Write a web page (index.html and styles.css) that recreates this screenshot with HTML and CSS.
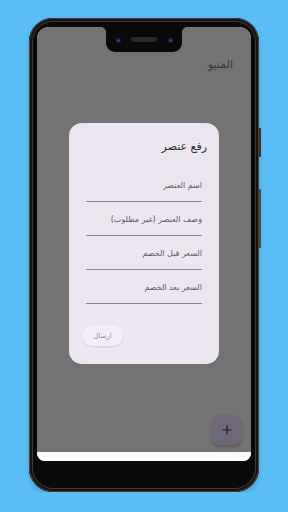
FILE: index.html
```html
<!DOCTYPE html>
<html lang="ar">
<head>
    <meta charset="UTF-8">
    <meta name="viewport" content="width=device-width, initial-scale=1.0">
    <title>المنيو</title>
    <link rel="stylesheet" href="styles.css">
</head>
<body>
    <div class="phone">
        <span class="side-btn power"></span>
        <span class="side-btn volume"></span>

        <div class="screen">
            <div class="notch">
                <span class="cam cam-left"></span>
                <span class="speaker"></span>
                <span class="cam cam-right"></span>
            </div>

            <div class="content">
                <div class="app-bar">المنيو</div>

                <div class="scrim">
                    <div class="dialog" dir="rtl">
                        <h2 class="dialog-title">رفع عنصر</h2>
                        <div class="field"><span>اسم العنصر</span></div>
                        <div class="field"><span>وصف العنصر (غير مطلوب)</span></div>
                        <div class="field"><span>السعر قبل الخصم</span></div>
                        <div class="field"><span>السعر بعد الخصم</span></div>
                        <div class="actions">
                            <button class="send-btn">ارسال</button>
                        </div>
                    </div>
                </div>

                <button class="fab">
                    <svg width="10" height="10" viewBox="0 0 10 10">
                        <path d="M5 0.5v9M0.5 5h9" stroke="#1a1530" stroke-width="1.2" fill="none"/>
                    </svg>
                </button>
            </div>
            <div class="nav-strip"></div>
        </div>
    </div>
</body>
</html>
```

FILE: styles.css
```css
body {
    margin: 0;
    background-color: #5bbdf7;
    font-family: "DejaVu Sans", sans-serif;
}

.phone {
    position: relative;
    width: 230px;
    height: 474px;
    margin: 18px auto 0;
    box-sizing: border-box;
    padding: 9px 8px 0;
    background-color: #0a0a0a;
    border-radius: 24px;
    box-shadow: inset 0 0 0 1px #4a4036,
                inset 0 0 0 3px #151515,
                inset 0 0 0 4px #3c3c3c,
                0 3px 6px rgba(0, 0, 0, 0.15);
}

.side-btn {
    position: absolute;
    right: -2px;
    width: 2px;
    background-color: #3a3129;
    border-radius: 0 1px 1px 0;
}

.power {
    top: 110px;
    height: 29px;
}

.volume {
    top: 171px;
    height: 59px;
    background-color: #4a4a4a;
}

.screen {
    position: relative;
    height: 434px;
    display: flex;
    flex-direction: column;
    border-radius: 12px 12px 8px 8px;
    overflow: hidden;
    background-color: #fbfbfb;
}

.notch {
    position: absolute;
    top: 0;
    left: 69px;
    width: 76px;
    height: 25px;
    background-color: #0a0a0a;
    border-radius: 0 0 9px 9px;
    display: flex;
    align-items: center;
    justify-content: center;
    gap: 10px;
    z-index: 5;
}

.notch::before,
.notch::after {
    content: "";
    position: absolute;
    top: 0;
    width: 6px;
    height: 6px;
}

.notch::before {
    left: -6px;
    background: radial-gradient(circle at 0 100%, transparent 6px, #0a0a0a 6.5px);
}

.notch::after {
    right: -6px;
    background: radial-gradient(circle at 100% 100%, transparent 6px, #0a0a0a 6.5px);
}

.cam {
    width: 6px;
    height: 6px;
    border-radius: 50%;
    background: radial-gradient(circle at 60% 60%, #3a4fa0 0, #1b2248 2px, #0d0d14 3px);
}

.cam-left {
    box-shadow: -1px -2px 0 -2px #fff;
}

.speaker {
    width: 26px;
    height: 5px;
    border-radius: 3px;
    background-color: #2b2b2b;
}

.content {
    position: relative;
    flex: 1;
    background-color: #737373;
}

.nav-strip {
    height: 9px;
    background-color: #fbfbfb;
}

.app-bar {
    padding: 32px 18px 0 0;
    text-align: right;
    font-size: 11px;
    line-height: 12px;
    color: #333;
}

.scrim {
    position: absolute;
    top: 0;
    left: 0;
    right: 0;
    bottom: 0;
    display: flex;
    justify-content: center;
    align-items: flex-start;
    padding-top: 96px;
}

.dialog {
    width: 150px;
    box-sizing: border-box;
    padding: 16px 17px 18px;
    background-color: #ece6f0;
    border-radius: 13px;
}

.dialog-title {
    margin: 0 -5px 13px 0;
    font-size: 11px;
    line-height: 16px;
    font-weight: normal;
    color: #2a2830;
}

.field {
    height: 34px;
    box-sizing: border-box;
    padding-top: 12px;
    border-bottom: 1px solid #8a8590;
    font-size: 8px;
    line-height: 12px;
    color: #5d5963;
}

.actions {
    display: flex;
    justify-content: flex-end;
    margin: 21px 0 0 -4px;
}

.send-btn {
    width: 41px;
    height: 21px;
    border: none;
    border-radius: 11px;
    background-color: #f3eef6;
    box-shadow: 0 1px 2px rgba(0, 0, 0, 0.12);
    font-family: inherit;
    font-size: 7px;
    color: #8d8796;
    padding: 0;
}

.fab {
    position: absolute;
    right: 9px;
    bottom: 7px;
    width: 31px;
    height: 30px;
    border: none;
    border-radius: 8px;
    background-color: #6e6878;
    box-shadow: 0 2px 3px rgba(0, 0, 0, 0.2);
    display: flex;
    align-items: center;
    justify-content: center;
    padding: 0;
}
```
